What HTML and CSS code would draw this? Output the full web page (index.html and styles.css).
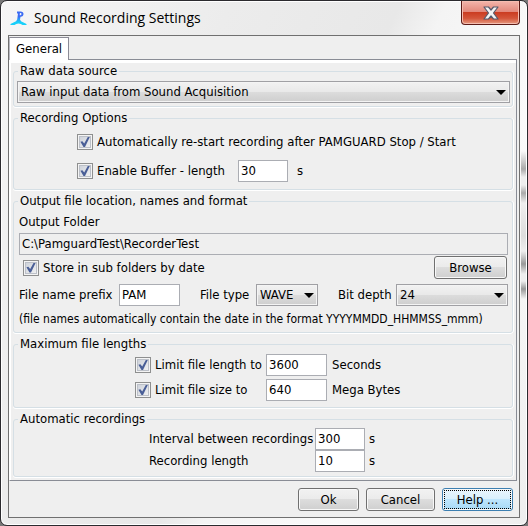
FILE: index.html
```html
<!DOCTYPE html>
<html lang="en">
<head>
<meta charset="utf-8">
<title>Sound Recording Settings</title>
<link rel="stylesheet" href="styles.css">
</head>
<body>
<main class="window">
  <header class="titlebar">
    <svg class="app-icon" viewBox="0 0 17 16" aria-hidden="true">
      <defs><linearGradient id="logo" gradientUnits="userSpaceOnUse" x1="0" y1="1" x2="0" y2="15"><stop offset="0.4" stop-color="#3c6cf4"/><stop offset="0.8" stop-color="#18d0fa"/></linearGradient></defs>
      <path fill="url(#logo)" fill-rule="evenodd" d="M7 1.500h3.500q3 0 3 2.500t-3 2.800L10 9.500q.5 2 3 2.700l3.500 1.800v1h-4q-1.500-1.500-4-1.500T4.500 15H.5v-1L4 12.200q2.500-.7 3.200-2.700l.8-6H7zM9.900 3l-.2 2.200h.8q1 0 1-1.100T10.500 3z"/>
    </svg>
    <h1 class="title">Sound Recording Settings</h1>
    <button class="close" type="button" aria-label="Close">
      <svg class="close-icon" viewBox="0 0 16 14" aria-hidden="true"><path d="M1 1h4.500L8 4l2.500-3H15l-4.500 6 4.500 6h-4.500L8 10l-2.500 3H1l4.500-6z" fill="#f4f4f4" stroke="#555a6c" stroke-width="1.200" stroke-linejoin="round"/></svg>
    </button>
  </header>
  <form class="client">
    <div class="tabs" role="tablist"><button class="tab" type="button" role="tab" aria-selected="true">General</button></div>
    <div class="pane" role="tabpanel">
      <fieldset class="group">
        <legend>Raw data source</legend>
        <div class="source">
          <span class="combo"><select aria-label="Raw data source"><option>Raw input data from Sound Acquisition</option></select></span>
        </div>
      </fieldset>

      <fieldset class="group">
        <legend>Recording Options</legend>
        <div class="options">
          <div class="row"><label class="check"><input type="checkbox" checked>Automatically re-start recording after PAMGUARD Stop / Start</label></div>
          <div class="row">
            <label class="check"><input type="checkbox" checked>Enable Buffer - length</label>
            <input class="field buffer" type="text" value="30" aria-label="Buffer length"><span>s</span>
          </div>
        </div>
      </fieldset>

      <fieldset class="group">
        <legend>Output file location, names and format</legend>
        <div class="output">
          <label class="caption" for="folder">Output Folder</label>
          <input class="field path" id="folder" type="text" value="C:\PamguardTest\RecorderTest" readonly>
          <div class="row store">
            <label class="check"><input type="checkbox" checked>Store in sub folders by date</label>
            <button class="button browse" type="button">Browse</button>
          </div>
          <div class="format">
            <label for="prefix">File name prefix</label>
            <input class="field" id="prefix" type="text" value="PAM">
            <label for="type">File type</label>
            <span class="combo"><select id="type"><option>WAVE</option></select></span>
            <label for="depth">Bit depth</label>
            <span class="combo"><select id="depth"><option>24</option></select></span>
          </div>
          <p class="note">(file names automatically contain the date in the format YYYYMMDD_HHMMSS_mmm)</p>
        </div>
      </fieldset>

      <fieldset class="group">
        <legend>Maximum file lengths</legend>
        <div class="limits">
          <label class="check"><input type="checkbox" checked>Limit file length to</label>
          <input class="field" type="text" value="3600" aria-label="Maximum length in seconds"><span>Seconds</span>
          <label class="check"><input type="checkbox" checked>Limit file size to</label>
          <input class="field" type="text" value="640" aria-label="Maximum size in megabytes"><span>Mega Bytes</span>
        </div>
      </fieldset>

      <fieldset class="group">
        <legend>Automatic recordings</legend>
        <div class="auto">
          <label for="interval">Interval between recordings</label>
          <input class="field" id="interval" type="text" value="300"><span>s</span>
          <label for="length">Recording length</label>
          <input class="field" id="length" type="text" value="10"><span>s</span>
        </div>
      </fieldset>
    </div>
    <footer class="actions">
      <button class="button ok" type="button">Ok</button>
      <button class="button cancel" type="button">Cancel</button>
      <button class="button help" type="button">Help ...</button>
    </footer>
  </form>
</main>
</body>
</html>
```
FILE: styles.css
```css
* { box-sizing: border-box; }

body {
  margin: 0;
  background: #777;
  color: #000;
  font: 13px/16px "DejaVu Sans Condensed", "DejaVu Sans", sans-serif;
}

input, select, button { font: inherit; color: inherit; margin: 0; }

.window {
  display: flex;
  flex-direction: column;
  min-height: 100vh;
  padding: 0 7px 7px;
  border: 1px solid #2b2a2e;
  border-radius: 7px;
  background:
    linear-gradient(transparent 150px, #aaa 168px, #eee 176px, #eee 184px, #aaa 192px, #eee 202px, #ddd 235px, #eee 250px, #999 263px, #eee 273px, #eee 280px, #999 288px, transparent 298px) right / 6px 100% no-repeat,
    linear-gradient(115deg, #f6f6f6 0, #ececec 30%, #e8e8e8 52%, #f4f4f4 58%, #fafafa 75%, #eee 100%);
  box-shadow: inset 0 0 0 1px #fff;
}

.titlebar { display: flex; align-items: center; height: 34px; padding-left: 2px; }
.app-icon { width: 17px; height: 16px; margin-right: 7px; }
.title { margin: 0; font: 14px/20px "Open Sans", sans-serif; white-space: nowrap; }

.close {
  display: flex;
  align-items: center;
  justify-content: center;
  align-self: flex-start;
  width: 59px;
  height: 24px;
  margin-left: auto;
  padding: 0;
  border: 1px solid #5c1a16;
  border-top: 0;
  border-radius: 0 0 4px 4px;
  background: linear-gradient(#f3b5ab 0, #e2877a 48%, #cb3d22 50%, #d4553a 75%, #e69a80 100%);
  box-shadow: inset 0 0 0 1px #f5bdb0;
}
.close-icon { width: 16px; height: 14px; }

.client {
  display: flex;
  flex: 1;
  flex-direction: column;
  border: 1px solid #707070;
  background: #efefef;
}

.tabs { display: flex; padding-top: 1px; }
.tab {
  height: 23px;
  margin-bottom: -1px;
  padding: 0 6px;
  border: 1px solid #8b8b96;
  border-left-color: #b8b8c0;
  border-bottom: 0;
  background: #fff;
  z-index: 1;
}

.pane {
  margin-right: 2px;
  padding: 3px 3px 3px;
  border: 1px solid #898c95;
  border-left-color: #fff;
  box-shadow: inset 0 3px #fff, inset 1px 0 #fff;
}

.group {
  min-width: 0;
  margin: 0 0 3px;
  padding: 0;
  border: 1px solid #d5dfe5;
  border-radius: 3px;
  box-shadow: 0 1px #fff, 1px 0 #fff;
}
.pane .group:last-child { margin-bottom: 0; }
.group legend { margin-left: 4px; padding: 0 2px; }

.row { display: flex; align-items: center; min-height: 22px; }
.check { display: flex; align-items: center; gap: 4px; white-space: nowrap; }

.check input {
  appearance: none;
  display: grid;
  flex: none;
  place-items: center;
  width: 16px;
  height: 16px;
  border: 1px solid #8e8f8f;
  background: linear-gradient(135deg, #c8cdd6, #f6f6f6);
  box-shadow: inset 0 0 0 1px #f4f4f4, inset 0 0 0 2px #bcc0c8;
}
.check input:checked::before {
  content: "";
  width: 10px;
  height: 10px;
  background: #4a5f97;
  clip-path: polygon(4% 48%, 24% 42%, 42% 66%, 78% 0, 98% 0, 50% 100%, 35% 100%);
}

.field {
  min-width: 0;
  width: 100%;
  height: 22px;
  padding: 0 3px 2px 2px;
  border: 1px solid #abadb3;
  border-radius: 0;
  outline: 0;
  background: #fff;
}
.field[readonly] { background: #efefef; }

.combo { position: relative; display: block; min-width: 0; }
.combo select {
  appearance: none;
  display: block;
  width: 100%;
  height: 22px;
  padding: 0 16px 0 3px;
  border: 1px solid #a0a0a4;
  border-radius: 0;
  background: linear-gradient(#f2f2f2 0, #e9e9e9 48%, #dcdcdc 50%, #cecece 100%);
  box-shadow: inset 0 0 0 1px #f4f4f4;
}
.combo::after {
  content: "";
  position: absolute;
  top: 9px;
  right: 4px;
  border: 5px solid transparent;
  border-top-color: #000;
  border-bottom: 0;
  pointer-events: none;
}

.button {
  height: 23px;
  padding: 0;
  border: 1px solid #707070;
  border-radius: 3px;
  background: linear-gradient(#f2f2f2 0, #ebebeb 48%, #dddddd 50%, #cfcfcf 100%);
  box-shadow: inset 0 0 0 1px #f8f8f8;
}

.source { padding: 2px 2px 3px 3px; }

.options { display: grid; gap: 7px; padding: 5px 5px 7px 63px; }
.buffer { width: 50px; margin: 0 9px 0 13px; }

.output { padding: 5px 4px 5px 5px; }
.caption { display: block; margin-bottom: 3px; }
.path { display: block; }
.store { justify-content: space-between; margin: 1px 1px 5px 4px; }
.browse { width: 73px; }
.format {
  display: grid;
  grid-template-columns: 92px 61px 60px 62px 62px 1fr;
  column-gap: 8px;
  align-items: center;
  white-space: nowrap;
}
.format .field + label, .format .combo + label { padding-left: 12px; }
.note { margin: 5px 0 0; font-size: 12px; white-space: nowrap; }

.limits {
  display: grid;
  grid-template-columns: 126px 61px 1fr;
  gap: 3px 5px;
  align-items: center;
  padding: 2px 5px 6px 121px;
}

.auto {
  display: grid;
  grid-template-columns: 162px 50px 1fr;
  column-gap: 4px;
  align-items: center;
  padding: 1px 5px 4px 135px;
  white-space: nowrap;
}

.actions { display: flex; justify-content: flex-end; gap: 7px; padding: 7px 6px 5px; }
.ok { width: 61px; }
.cancel { width: 69px; }
.help {
  width: 71px;
  border-color: #3c7fb1;
  background: linear-gradient(#eaf6fd 0, #d9f0fc 48%, #bee6fd 50%, #a7d9f5 100%);
  outline: 1px dotted #000;
  outline-offset: -3px;
}
```
